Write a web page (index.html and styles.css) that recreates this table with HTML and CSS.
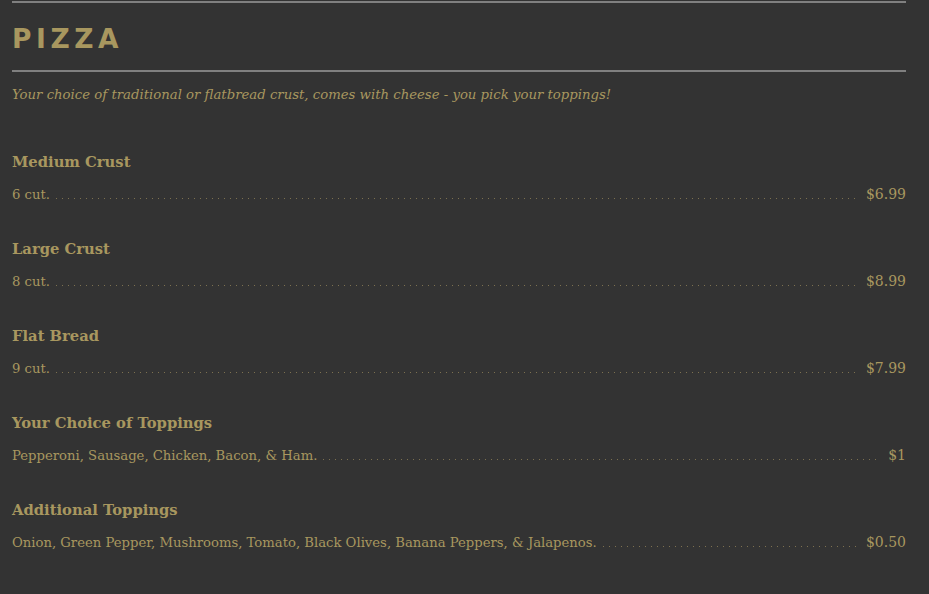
FILE: index.html
```html
<!DOCTYPE html>
<html>
<head>
<meta charset="utf-8">
<link rel="stylesheet" href="styles.css">
</head>
<body>
<section class="menu">
  <div class="rule"></div>
  <h1 class="title">PIZZA</h1>
  <div class="rule"></div>
  <p class="intro">Your choice of traditional or flatbread crust, comes with cheese - you pick your toppings!</p>

  <div class="item">
    <h2 class="item-name">Medium Crust</h2>
    <div class="line"><span class="desc">6 cut.</span><span class="leader"></span><span class="price">$6.99</span></div>
  </div>
  <div class="item">
    <h2 class="item-name">Large Crust</h2>
    <div class="line"><span class="desc">8 cut.</span><span class="leader"></span><span class="price">$8.99</span></div>
  </div>
  <div class="item">
    <h2 class="item-name">Flat Bread</h2>
    <div class="line"><span class="desc">9 cut.</span><span class="leader"></span><span class="price">$7.99</span></div>
  </div>
  <div class="item">
    <h2 class="item-name">Your Choice of Toppings</h2>
    <div class="line"><span class="desc">Pepperoni, Sausage, Chicken, Bacon, &amp; Ham.</span><span class="leader"></span><span class="price">$1</span></div>
  </div>
  <div class="item">
    <h2 class="item-name">Additional Toppings</h2>
    <div class="line"><span class="desc">Onion, Green Pepper, Mushrooms, Tomato, Black Olives, Banana Peppers, &amp; Jalapenos.</span><span class="leader"></span><span class="price">$0.50</span></div>
  </div>
</section>
</body>
</html>
```
FILE: styles.css
```css
html, body {
  margin: 0;
  padding: 0;
  background: #333333;
}
body {
  color: #a8975f;
  font-family: "DejaVu Serif", "Liberation Serif", serif;
}
.menu {
  width: 894px;
  margin: 0 0 0 12px;
  padding-top: 1px;
}
.rule {
  height: 2px;
  background: #808080;
}
.title {
  margin: 0;
  height: 67px;
  padding-top: 3px;
  box-sizing: border-box;
  display: flex;
  align-items: center;
  font-family: "DejaVu Sans", sans-serif;
  font-weight: bold;
  font-size: 26.5px;
  letter-spacing: 4.6px;
  color: #a8975f;
}
.intro {
  margin: 15px 0 0;
  font-style: italic;
  font-size: 13.25px;
}
.item {
  margin-top: 50px;
}
.item + .item {
  margin-top: 34px;
}
.item-name {
  margin: 0;
  font-size: 14.75px;
  font-weight: bold;
  line-height: 20px;
}
.line {
  display: flex;
  align-items: baseline;
  margin-top: 12px;
  font-size: 13.2px;
  line-height: 20px;
}
.leader {
  flex: 1;
  margin: 0 8px 0 6px;
  height: 6px;
  background-image: linear-gradient(to right, #7d7150 1px, transparent 1px);
  background-size: 6px 1px;
  background-repeat: repeat-x;
  background-position: left bottom;
}
.price {
  white-space: nowrap;
  font-size: 14px;
}
```
